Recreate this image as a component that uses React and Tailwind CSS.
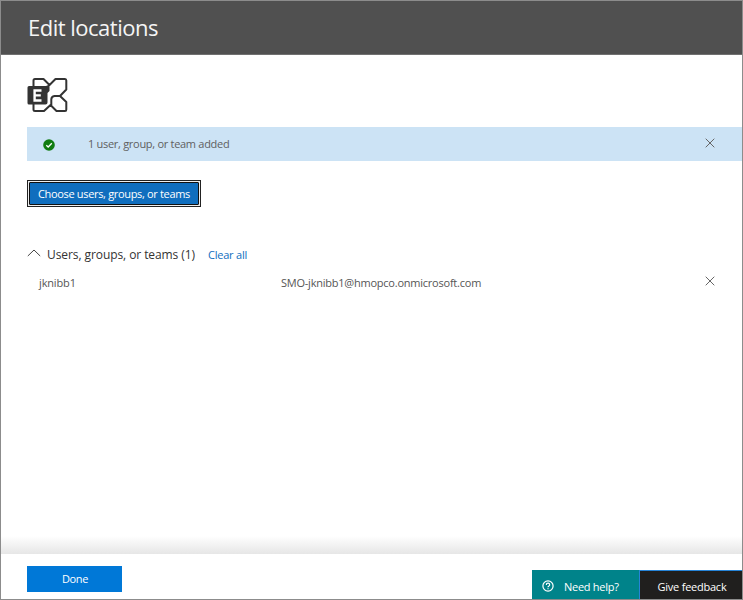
function CloseIcon() {
  return (
    <svg width="10" height="10" viewBox="0 0 10 10" fill="none" stroke="#666" strokeWidth="1">
      <path d="M.7.7l8.6 8.6M9.3.7L.7 9.3" />
    </svg>
  );
}

function ExchangeIcon() {
  return (
    <svg width="42" height="37" viewBox="0 0 42 37" fill="none">
      <g stroke="#333" strokeWidth="2" strokeLinejoin="round">
        <path d="M6.500 9V3.500Q6.500 2 8 2H16.500L22.500 8L28.500 2H38Q39.300 2 39.300 3.500V12.500L33 19L39.300 25V32.500Q39.300 34 38 34H29.500L23.500 28L17 34H8Q6.500 34 6.500 32.500V27" />
        <path d="M33 19H27.500Q24.300 19.500 24.300 22.500V28" />
      </g>
      <path d="M2 9H19L22.500 7.500V14L20.500 16V25.500Q20.500 27.500 18.500 27.500H2Q.5 27.500 .5 26V10.500Q.5 9 2 9Z" fill="#333" />
      <path d="M14.500 13.500H7.600V23.500H14.500M7.600 18.400H13.800" stroke="#fff" strokeWidth="2.400" />
    </svg>
  );
}

export default function App() {
  return (
    <div className="flex h-[600px] w-[743px] flex-col overflow-hidden border border-[#8c8c8c] bg-white font-['Open_Sans','Noto_Sans',sans-serif] text-[#555]">
      <header className="flex h-[54px] shrink-0 items-center border-b border-[#707070] bg-[#505050] pl-[27px]">
        <h1 className="-mt-0.5 text-[22px] leading-7 tracking-[-0.5px] whitespace-nowrap text-[#f5f5f5]">Edit locations</h1>
      </header>

      <main className="flex grow flex-col pt-[22px] pl-[26px]">
        <ExchangeIcon />
        <div className="mt-[13px] flex h-[34px] items-center bg-[#cce3f5] pr-[27px]">
          <svg className="mt-0.5 ml-4" width="12" height="12" viewBox="0 0 12 12">
            <circle cx="6" cy="6" r="5.800" fill="#107c10" />
            <path d="M3.300 6.200L5.200 8L8.800 4.300" fill="none" stroke="#fff" strokeWidth="1.300" />
          </svg>
          <span className="ml-[33px] grow text-[11px] tracking-[-0.29px] text-[#606060]">1 user, group, or team added</span>
          <button className="mb-[3px]"><CloseIcon /></button>
        </div>

        <button className="mt-[19px] h-[27px] w-[174px] border border-[#222] bg-[#eee] p-px">
          <span className="flex h-full items-center justify-center rounded-[1px] border border-[#111] bg-[#106ebe] pt-0.5 text-[11px] tracking-[-0.33px] whitespace-nowrap text-white">
            Choose users, groups, or teams
          </span>
        </button>

        <section className="mt-[38px]">
          <div className="flex h-5 items-center">
            <svg width="14" height="8" viewBox="0 0 14 8" fill="none" stroke="#444" className="mb-[5px]">
              <path d="M.8 7L7 1L13.200 7" />
            </svg>
            <h2 className="ml-[6px] w-[161px] text-[12px] tracking-[-0.08px] whitespace-nowrap text-[#333]">Users, groups, or teams (1)</h2>
            <a className="text-[11px] tracking-[-0.22px] whitespace-nowrap text-[#106ebe]">Clear all</a>
          </div>
          <div className="mt-2 flex h-5 items-center pr-[27px] pl-3 text-[11px]">
            <span className="w-[242px] tracking-[-0.15px]">jknibb1</span>
            <span className="grow tracking-[-0.23px]">SMO-jknibb1@hmopco.onmicrosoft.com</span>
            <button className="mb-1"><CloseIcon /></button>
          </div>
        </section>
      </main>

      <div className="h-[18px] shrink-0 bg-gradient-to-b from-white to-[#e6e6e6]" />
      <footer className="flex h-[45px] shrink-0 items-start justify-between pl-[26px] text-[11px] text-white">
        <button className="mt-3 h-[26px] w-[95px] bg-[#0078d7] pl-px tracking-[-0.4px]">Done</button>
        <div className="mt-4 flex h-[29px] whitespace-nowrap">
          <button className="flex w-[107px] items-center bg-[#00838a] pt-[5px] pl-[10px]">
            <svg className="mb-0.5" width="12" height="12" viewBox="0 0 12 12" fill="none" stroke="#fff" strokeWidth="1.200">
              <circle cx="6" cy="6" r="5.100" />
              <path d="M4.300 4.900Q4.300 3.200 6 3.200T7.700 4.800Q7.700 5.600 6.800 6.100Q6 6.500 6 7.200M6 8.200V9.300" />
            </svg>
            <span className="ml-[10px] tracking-[-0.28px]">Need help?</span>
          </button>
          <button className="w-[103px] border-t border-l border-[#2684d8] bg-[#201f1e] pt-[5px] pl-[2px] tracking-[-0.24px]">Give feedback</button>
        </div>
      </footer>
    </div>
  );
}
